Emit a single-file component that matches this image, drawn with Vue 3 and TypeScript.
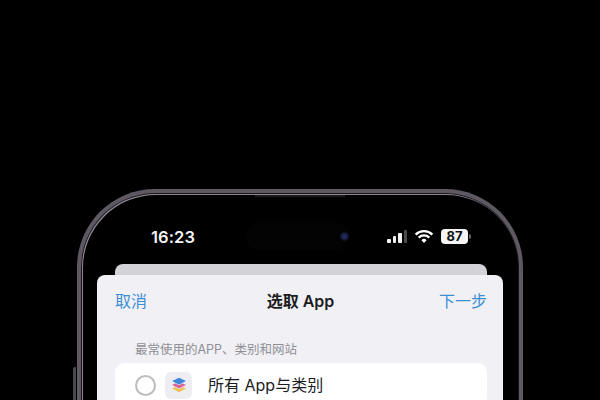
<script setup lang="ts">
const bars: number[] = [4, 7, 10, 13]
</script>

<template>
  <div class="page">
    <div class="phone">
      <span class="side-button"></span>
      <span class="top-slot"></span>
      <div class="status">
        <span class="time">16:23</span>
        <div class="island"><span class="camera"></span></div>
        <div class="indicators">
          <div class="signal">
            <i
              v-for="(h, idx) in bars"
              :key="h"
              :class="{ off: idx === 3 }"
              :style="{ height: h + 'px' }"
            ></i>
          </div>
          <svg class="wifi" width="20" height="15" viewBox="0 0 18 14">
            <path d="M1.2 5.2a11.2 11.2 0 0 1 15.6 0" fill="none" stroke="#fff" stroke-width="2.1" />
            <path d="M4 8a7.3 7.3 0 0 1 10 0" fill="none" stroke="#fff" stroke-width="2.1" />
            <path d="M6.6 10.4a3.4 3.4 0 0 1 4.8 0L9 13z" fill="#fff" />
          </svg>
          <div class="battery">
            <span class="level">87</span>
            <span class="nub"></span>
          </div>
        </div>
      </div>
      <div class="sheets">
        <div class="back-card"></div>
        <div class="sheet">
          <div class="nav">
            <span class="link">取消</span>
            <span class="title">选取 App</span>
            <span class="link">下一步</span>
          </div>
          <div class="section">最常使用的APP、类别和网站</div>
          <div class="row">
            <span class="radio"></span>
            <span class="app-icon">
              <svg width="18" height="18" viewBox="0 0 18 18">
                <path d="M2 12.6 9 9.2l7 3.4-7 3.6z" fill="#eec25a" />
                <path d="M2 9.4 9 6l7 3.4-7 3.6z" fill="#fff" />
                <path d="M2 8.9 9 5.5l7 3.4-7 3.6z" fill="#d9649a" />
                <path d="M2 5.6 9 2.2l7 3.4-7 3.6z" fill="#fff" />
                <path d="M2 5.1 9 1.7l7 3.4-7 3.6z" fill="#3f86dc" />
              </svg>
            </span>
            <span class="row-label">所有 App与类别</span>
          </div>
        </div>
      </div>
    </div>
  </div>
</template>

<style scoped>
.page {
  width: 600px;
  height: 400px;
  background: #000;
  overflow: hidden;
  padding: 189px 0 0 77px;
  box-sizing: border-box;
  font-family: Inter, "Noto Sans CJK SC", sans-serif;
}
.phone {
  position: relative;
  width: 446px;
  height: 300px;
  box-sizing: border-box;
  border: 4px solid #5d5862;
  border-bottom: 0;
  border-radius: 78px 78px 0 0;
  box-shadow: inset 0 0 0 1px #17151a, inset 1px 1px 0 1px #8c8791;
  background: #000;
}
.side-button {
  position: absolute;
  left: -8px;
  top: 174px;
  width: 3px;
  height: 60px;
  background: #4b4750;
  border-radius: 2px 0 0 2px;
}
.top-slot {
  position: absolute;
  left: 174px;
  top: 2px;
  width: 90px;
  height: 2px;
  background: #1b1a1d;
}
.status {
  display: flex;
  align-items: center;
  height: 27px;
  margin-top: 30px;
  padding: 0 48px 0 70px;
}
.time {
  width: 44px;
  color: #f4f4f4;
  font-size: 16.5px;
  font-weight: 600;
  letter-spacing: 0.1px;
}
.island {
  display: flex;
  align-items: center;
  justify-content: flex-end;
  width: 104px;
  height: 27px;
  margin-left: 50px;
  border-radius: 14px;
  background: #030303;
}
.camera {
  width: 9px;
  height: 9px;
  border-radius: 50%;
  background: radial-gradient(circle, #1f2a5c 25%, #0c0f22 70%, #060606 100%);
}
.indicators {
  display: flex;
  align-items: center;
  margin-left: auto;
  gap: 7px;
}
.signal {
  display: flex;
  align-items: flex-end;
  gap: 2px;
  height: 13px;
}
.signal i {
  width: 3.5px;
  border-radius: 1px;
  background: #f2f2f2;
}
.signal i.off {
  background: #4b4b4b;
}
.wifi {
  display: block;
}
.battery {
  display: flex;
  align-items: center;
}
.level {
  display: block;
  width: 27px;
  height: 15px;
  border-radius: 4px;
  background: #f5f5f5;
  color: #111;
  font-size: 13px;
  font-weight: 700;
  line-height: 15px;
  text-align: center;
}
.nub {
  width: 2px;
  height: 5px;
  margin-left: 1px;
  border-radius: 0 2px 2px 0;
  background: #6a6a6a;
}
.sheets {
  margin-top: 14px;
  padding: 0 16px;
}
.back-card {
  height: 11px;
  margin: 0 16px 0 18px;
  border-radius: 8px 8px 0 0;
  background: #d3d2d6;
}
.sheet {
  height: 200px;
  padding: 0 16px 0 18px;
  border-radius: 8px 8px 0 0;
  background: #f0f0f5;
  box-sizing: border-box;
}
.nav {
  display: flex;
  align-items: center;
  justify-content: space-between;
  height: 50px;
  font-size: 16px;
}
.link {
  color: #3a8fd6;
}
.title {
  margin-left: 15px;
  color: #1d1d1f;
  font-weight: 600;
}
.section {
  margin: 17px 0 0 20px;
  color: #8f8f94;
  font-size: 12.5px;
  line-height: 16px;
}
.row {
  display: flex;
  align-items: center;
  height: 44px;
  margin-top: 5px;
  padding-left: 20px;
  border-radius: 9px;
  background: #fff;
}
.radio {
  width: 17px;
  height: 17px;
  border: 2px solid #bcbcc0;
  border-radius: 50%;
}
.app-icon {
  display: flex;
  align-items: center;
  justify-content: center;
  width: 27px;
  height: 27px;
  margin-left: 9px;
  border-radius: 6px;
  background: #eeeef2;
}
.row-label {
  margin-left: 16px;
  color: #1d1d1f;
  font-size: 16px;
  line-height: 20px;
  margin-bottom: 1px;
}
</style>
